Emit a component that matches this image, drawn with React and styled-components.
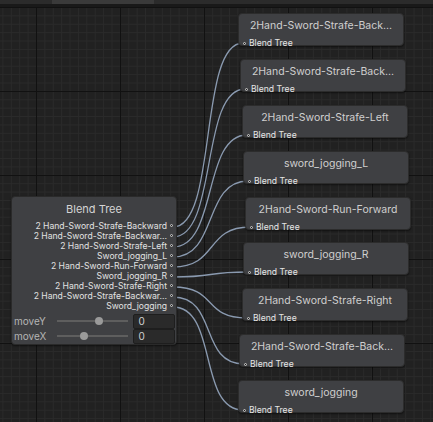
import React from "react";
import styled, { createGlobalStyle } from "styled-components";

const GlobalStyle = createGlobalStyle`
  html, body {
    margin: 0;
    padding: 0;
    background: #202020;
  }
  body {
    font-family: Inter, "Noto Sans", "Liberation Sans", sans-serif;
  }
`;

const motions = [
  { title: "2Hand-Sword-Strafe-Back...", x: 238, y: 13 },
  { title: "2Hand-Sword-Strafe-Back...", x: 240, y: 59 },
  { title: "2Hand-Sword-Strafe-Left", x: 242, y: 105 },
  { title: "sword_jogging_L", x: 243, y: 151 },
  { title: "2Hand-Sword-Run-Forward", x: 245, y: 197 },
  { title: "sword_jogging_R", x: 243, y: 242 },
  { title: "2Hand-Sword-Strafe-Right", x: 242, y: 288 },
  { title: "2Hand-Sword-Strafe-Back...", x: 239, y: 334 },
  { title: "sword_jogging", x: 238, y: 380 },
];

const outputs = [
  "2 Hand-Sword-Strafe-Backward",
  "2 Hand-Sword-Strafe-Backwar...",
  "2 Hand-Sword-Strafe-Left",
  "Sword_jogging_L",
  "2 Hand-Sword-Run-Forward",
  "Sword_jogging_R",
  "2 Hand-Sword-Strafe-Right",
  "2 Hand-Sword-Strafe-Backwar...",
  "Sword_jogging",
];

const params = [
  { name: "moveY", value: 0, knob: 0.58 },
  { name: "moveX", value: 0, knob: 0.37 },
];

// canvas starts 7px below the page top (tab strip)
const TOP = 7;

function edgePath(i, m) {
  const x1 = 173;
  const y1 = 227 + i * 10 - TOP;
  const x2 = m.x + 5;
  const y2 = m.y + 30 - TOP;
  const t = 45;
  return `M${x1} ${y1} C${x1 + t} ${y1} ${x2 - t} ${y2} ${x2} ${y2}`;
}

export default function App() {
  return (
    <>
      <GlobalStyle />
      <Window>
        <TabStrip>
          <Tab />
        </TabStrip>
        <Canvas>
          <Edges width="433" height="415">
            {motions.map((m, i) => (
              <path
                key={i}
                d={edgePath(i, m)}
                fill="none"
                stroke="#8a9ab0"
                strokeWidth="1.3"
              />
            ))}
          </Edges>

          <TreeNode>
            <TreeTitle>Blend Tree</TreeTitle>
            <OutputList>
              {outputs.map((o, i) => (
                <OutputRow key={i}>
                  <span>{o}</span>
                  <Port />
                </OutputRow>
              ))}
            </OutputList>
            {params.map((p) => (
              <ParamRow key={p.name}>
                <ParamLabel>{p.name}</ParamLabel>
                <Slider>
                  <Knob style={{ left: `${p.knob * 100}%` }} />
                </Slider>
                <ValueField>{p.value}</ValueField>
              </ParamRow>
            ))}
          </TreeNode>

          {motions.map((m, i) => (
            <MotionNode key={i} style={{ left: m.x, top: m.y - TOP }}>
              <MotionTitle>{m.title}</MotionTitle>
              <MotionFooter>
                <Port />
                <span>Blend Tree</span>
              </MotionFooter>
            </MotionNode>
          ))}
        </Canvas>
      </Window>
    </>
  );
}

const Window = styled.div`
  width: 433px;
  height: 422px;
  display: flex;
  flex-direction: column;
  overflow: hidden;
`;

const TabStrip = styled.div`
  height: 4px;
  background: #2b2b2b;
  border-bottom: 3px solid #191919;
  position: relative;
`;

const Tab = styled.div`
  position: absolute;
  left: 52px;
  width: 102px;
  top: 0;
  height: 4px;
  background: #3a3a3a;
`;

const Canvas = styled.div`
  position: relative;
  flex: 1;
  background-color: #212121;
  background-image:
    linear-gradient(to right, #111111 1px, transparent 1px),
    linear-gradient(to bottom, #111111 1px, transparent 1px),
    linear-gradient(to right, #2a2a2a 1px, transparent 1px),
    linear-gradient(to bottom, #2a2a2a 1px, transparent 1px);
  background-size: 84px 84px, 84px 84px, 8.4px 8.4px, 8.4px 8.4px;
  background-position: 36px 0, 0 0, 36px 0, 0 0;
`;

const Edges = styled.svg`
  position: absolute;
  left: 0;
  top: 0;
`;

const TreeNode = styled.div`
  position: absolute;
  left: 11px;
  top: 189px;
  width: 166px;
  height: 149px;
  box-sizing: border-box;
  background: #3f4043;
  border: 1px solid #2a2a2a;
  border-radius: 4px;
  box-shadow: 0 1px 2px rgba(0, 0, 0, 0.5);
  display: flex;
  flex-direction: column;
`;

const TreeTitle = styled.div`
  height: 24px;
  padding-top: 1px;
  display: flex;
  align-items: center;
  justify-content: center;
  font-size: 11px;
  color: #d4d4d4;
`;

const OutputList = styled.div`
  display: flex;
  flex-direction: column;
  margin-bottom: 3px;
`;

const OutputRow = styled.div`
  height: 10px;
  display: flex;
  align-items: center;
  justify-content: flex-end;
  gap: 3px;
  padding-right: 3px;
  font-size: 8.6px;
  color: #e2e2e2;
  white-space: nowrap;
`;

const Port = styled.span`
  width: 1px;
  height: 1px;
  border: 1px solid #d0d0d0;
  border-radius: 50%;
  background: #1e1e1e;
  flex-shrink: 0;
`;

const ParamRow = styled.div`
  height: 16px;
  display: flex;
  align-items: center;
  padding-left: 2px;
  padding-right: 1px;
`;

const ParamLabel = styled.div`
  width: 44px;
  font-size: 10px;
  color: #b4b4b4;
`;

const Slider = styled.div`
  position: relative;
  width: 72px;
  height: 2px;
  background: #5e5e5e;
  margin-right: 5px;
`;

const Knob = styled.div`
  position: absolute;
  top: -3px;
  width: 8px;
  height: 8px;
  margin-left: -4px;
  border-radius: 50%;
  background: #9a9a9a;
`;

const ValueField = styled.div`
  width: 42px;
  height: 15px;
  box-sizing: border-box;
  background: #2a2a2a;
  border: 1px solid #1e1e1e;
  border-radius: 2px;
  font-size: 10px;
  color: #d0d0d0;
  padding-left: 4px;
  line-height: 13px;
`;

const MotionNode = styled.div`
  position: absolute;
  width: 166px;
  height: 33px;
  box-sizing: border-box;
  background: #3f4043;
  border: 1px solid #2c2c2c;
  border-radius: 4px;
  box-shadow: 0 1px 2px rgba(0, 0, 0, 0.5);
  display: flex;
  flex-direction: column;
  justify-content: space-between;
`;

const MotionTitle = styled.div`
  height: 22px;
  display: flex;
  align-items: center;
  justify-content: center;
  font-size: 10.5px;
  color: #cfcfcf;
  white-space: nowrap;
`;

const MotionFooter = styled.div`
  display: flex;
  align-items: center;
  gap: 3px;
  padding-left: 4px;
  height: 8px;
  margin-bottom: -2px;
  font-size: 8.6px;
  color: #e6e6e6;
  white-space: nowrap;
`;
